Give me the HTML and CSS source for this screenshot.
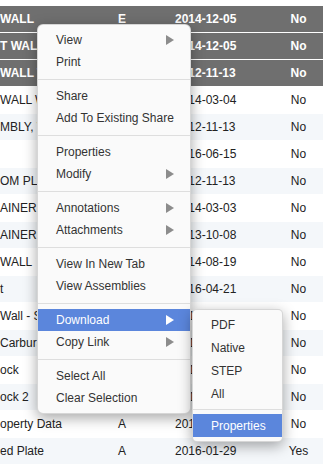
FILE: index.html
```html
<!DOCTYPE html>
<html lang="en">
<head>
  <meta charset="UTF-8">
  <meta name="viewport" content="width=device-width, initial-scale=1.0">
  <title>Parts</title>
  <link rel="stylesheet" href="styles.css">
</head>

<body>
<div class="grid-scroll">
  <table class="grid">
    <colgroup>
      <col class="c-name">
      <col class="c-rev">
      <col class="c-date">
      <col class="c-flag">
    </colgroup>
    <tbody>
      <tr class="selected"><td>WALL</td><td>E</td><td>2014-12-05</td><td>No</td></tr>
      <tr class="selected"><td>T WALL</td><td>E</td><td>2014-12-05</td><td>No</td></tr>
      <tr class="selected"><td>WALL WEST</td><td>E</td><td>2012-11-13</td><td>No</td></tr>
      <tr><td>WALL WEST</td><td>A</td><td>2014-03-04</td><td>No</td></tr>
      <tr><td>MBLY, WALL</td><td>A</td><td>2012-11-13</td><td>No</td></tr>
      <tr><td></td><td>A</td><td>2016-06-15</td><td>No</td></tr>
      <tr><td>OM PLATE</td><td>A</td><td>2012-11-13</td><td>No</td></tr>
      <tr><td>AINER</td><td>A</td><td>2014-03-03</td><td>No</td></tr>
      <tr><td>AINER</td><td>A</td><td>2013-10-08</td><td>No</td></tr>
      <tr><td>WALL</td><td>A</td><td>2014-08-19</td><td>No</td></tr>
      <tr><td>t</td><td>A</td><td>2016-04-21</td><td>No</td></tr>
      <tr><td>Wall - Sketch</td><td>A</td><td>2016-02-10</td><td>No</td></tr>
      <tr><td>Carburator</td><td>A</td><td>2015-09-22</td><td>No</td></tr>
      <tr><td>ock</td><td>A</td><td>2015-07-14</td><td>No</td></tr>
      <tr><td>ock 2</td><td>A</td><td>2015-07-14</td><td>No</td></tr>
      <tr><td>operty Data</td><td>A</td><td>2016-02-03</td><td>No</td></tr>
      <tr><td>ed Plate</td><td>A</td><td>2016-01-29</td><td>Yes</td></tr>
    </tbody>
  </table>
</div>

<ul class="context-menu">
  <li class="item has-sub">View</li>
  <li class="item">Print</li>
  <li class="sep"></li>
  <li class="item">Share</li>
  <li class="item">Add To Existing Share</li>
  <li class="sep"></li>
  <li class="item">Properties</li>
  <li class="item has-sub">Modify</li>
  <li class="sep"></li>
  <li class="item has-sub">Annotations</li>
  <li class="item has-sub">Attachments</li>
  <li class="sep"></li>
  <li class="item">View In New Tab</li>
  <li class="item">View Assemblies</li>
  <li class="sep"></li>
  <li class="item has-sub active">Download
    <ul class="context-menu submenu">
      <li class="item">PDF</li>
      <li class="item">Native</li>
      <li class="item">STEP</li>
      <li class="item">All</li>
      <li class="sep"></li>
      <li class="item active">Properties</li>
    </ul>
  </li>
  <li class="item has-sub">Copy Link</li>
  <li class="sep"></li>
  <li class="item">Select All</li>
  <li class="item">Clear Selection</li>
</ul>

</body>
</html>
```

FILE: styles.css
```css
body {
  margin: 0;
  font-family: "Liberation Sans", Arial, Helvetica, sans-serif;
  font-size: 12px;
  color: #222;
}
.grid-scroll {
  overflow: hidden;
  padding-top: 6px;
}
table.grid {
  border-collapse: collapse;
  table-layout: fixed;
  width: 323px;
}
.c-name { width: 112px; }
.c-rev { width: 57px; }
.c-date { width: 105px; }
.c-flag { width: 49px; }
.grid td {
  height: 26px;
  padding: 0 6px;
  border-bottom: 1px solid #fff;
  white-space: nowrap;
  overflow: hidden;
}
.grid td:first-child {
  padding-left: 0;
}
.grid td:last-child {
  text-align: center;
  padding: 0;
}
.grid tr:nth-child(odd) td {
  background: #f4f7fa;
}
.grid tr.selected td {
  background: #6f6f6f;
  color: #fff;
  font-weight: bold;
}

.context-menu {
  position: absolute;
  left: 37px;
  top: 24px;
  width: 154px;
  box-sizing: border-box;
  margin: 0;
  padding: 4px 0;
  list-style: none;
  background: #fafafa;
  border: 1px solid rgba(0, 0, 0, 0.14);
  border-radius: 6px;
  box-shadow: 0 4px 14px rgba(0, 0, 0, 0.35);
  color: #333;
}
.context-menu .item {
  position: relative;
  display: flex;
  align-items: center;
  height: 22px;
  padding: 0 16px 0 18px;
  white-space: nowrap;
}
.context-menu .has-sub::after {
  content: "";
  margin-left: auto;
  border-left: 8px solid #8c8c8c;
  border-top: 5px solid transparent;
  border-bottom: 5px solid transparent;
}
.context-menu .sep {
  height: 1px;
  margin: 6px 0 5px;
  background: #dedede;
}
.context-menu .item.active {
  background: #5b86dc;
  color: #fff;
}
.context-menu .item.active::after {
  border-left-color: #fff;
}

.submenu {
  left: calc(100% + 2px);
  top: 0;
  width: 91px;
  padding: 3px 0 4px;
  color: #333;
  border-radius: 5px;
}
.submenu .item {
  height: 23px;
}
.submenu .sep {
  margin: 4px 0;
}
```
